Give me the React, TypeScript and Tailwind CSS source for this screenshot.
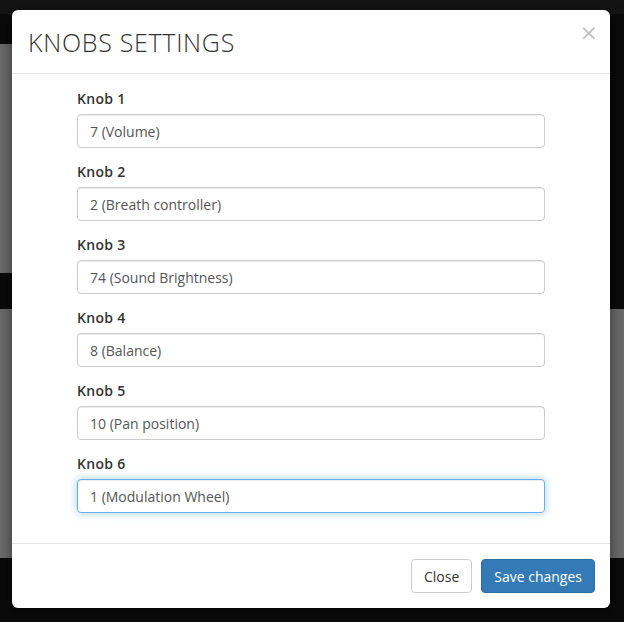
import React from "react";

const knobs = [
  { label: "Knob 1", value: "7 (Volume)" },
  { label: "Knob 2", value: "2 (Breath controller)" },
  { label: "Knob 3", value: "74 (Sound Brightness)" },
  { label: "Knob 4", value: "8 (Balance)" },
  { label: "Knob 5", value: "10 (Pan position)" },
  { label: "Knob 6", value: "1 (Modulation Wheel)", focus: true },
];

export default function App() {
  return (
    <div
      className="relative w-[624px] h-[622px] overflow-hidden bg-[#0a0a0a]"
      style={{ fontFamily: '"Open Sans", "Liberation Sans", sans-serif' }}
    >
      {/* dimmed page behind */}
      <div className="flex flex-col">
        <div className="h-[14px] bg-[#141414]" />
        <div className="h-[30px] bg-[#0a0a0a]" />
        <div className="h-[229px] flex">
          <div className="w-[312px] bg-[#6b6b6b]" />
          <div className="flex-1 bg-[#0a0a0a]" />
        </div>
        <div className="h-[36px] bg-[#0a0a0a]" />
        <div className="h-[249px] bg-[#6b6b6b]" />
        <div className="flex-1 bg-[#0a0a0a]" />
      </div>

      {/* modal */}
      <div className="absolute left-[12px] top-[10px] w-[598px] bg-white rounded-[6px] shadow-[0_5px_15px_rgba(0,0,0,0.5)] flex flex-col">
        <div className="h-[64px] px-[15px] pt-[15px] border-b border-[#e5e5e5] flex justify-between">
          <h4 className="text-[25px] leading-[34px] text-[#333] font-light tracking-[0.7px] pl-[1px]">KNOBS SETTINGS</h4>
          <span
            className="text-[22px] leading-none font-normal text-[#c4c4c4] mt-[-3px] mr-[-3px]"
            style={{ fontFamily: '"DejaVu Sans", sans-serif' }}
          >
            ×
          </span>
        </div>
        <div className="px-[65px] pt-[15px] pb-[30px] flex flex-col gap-[14px] border-b border-[#e5e5e5]">
          {knobs.map((k) => (
            <div key={k.label} className="flex flex-col">
              <label className="h-[20px] leading-[20px] mb-[5px] text-[14px] font-semibold tracking-[0.3px] text-[#333]">
                {k.label}
              </label>
              <div
                className={
                  "h-[34px] rounded-[4px] border px-[12px] flex items-center text-[14px] text-[#555] " +
                  (k.focus
                    ? "border-[#66afe9] shadow-[inset_0_1px_1px_rgba(0,0,0,0.075),0_0_8px_rgba(102,175,233,0.6)]"
                    : "border-[#ccc] shadow-[inset_0_1px_1px_rgba(0,0,0,0.075)]")
                }
              >
                {k.value}
              </div>
            </div>
          ))}
        </div>
        <div className="p-[15px] flex justify-end gap-[9px]">
          <button className="h-[34px] px-[12px] rounded-[4px] border border-[#ccc] bg-white text-[14px] text-[#333]">
            Close
          </button>
          <button className="h-[34px] px-[12px] rounded-[4px] border border-[#2e6da4] bg-[#337ab7] text-[14px] text-white">
            Save changes
          </button>
        </div>
      </div>
    </div>
  );
}
